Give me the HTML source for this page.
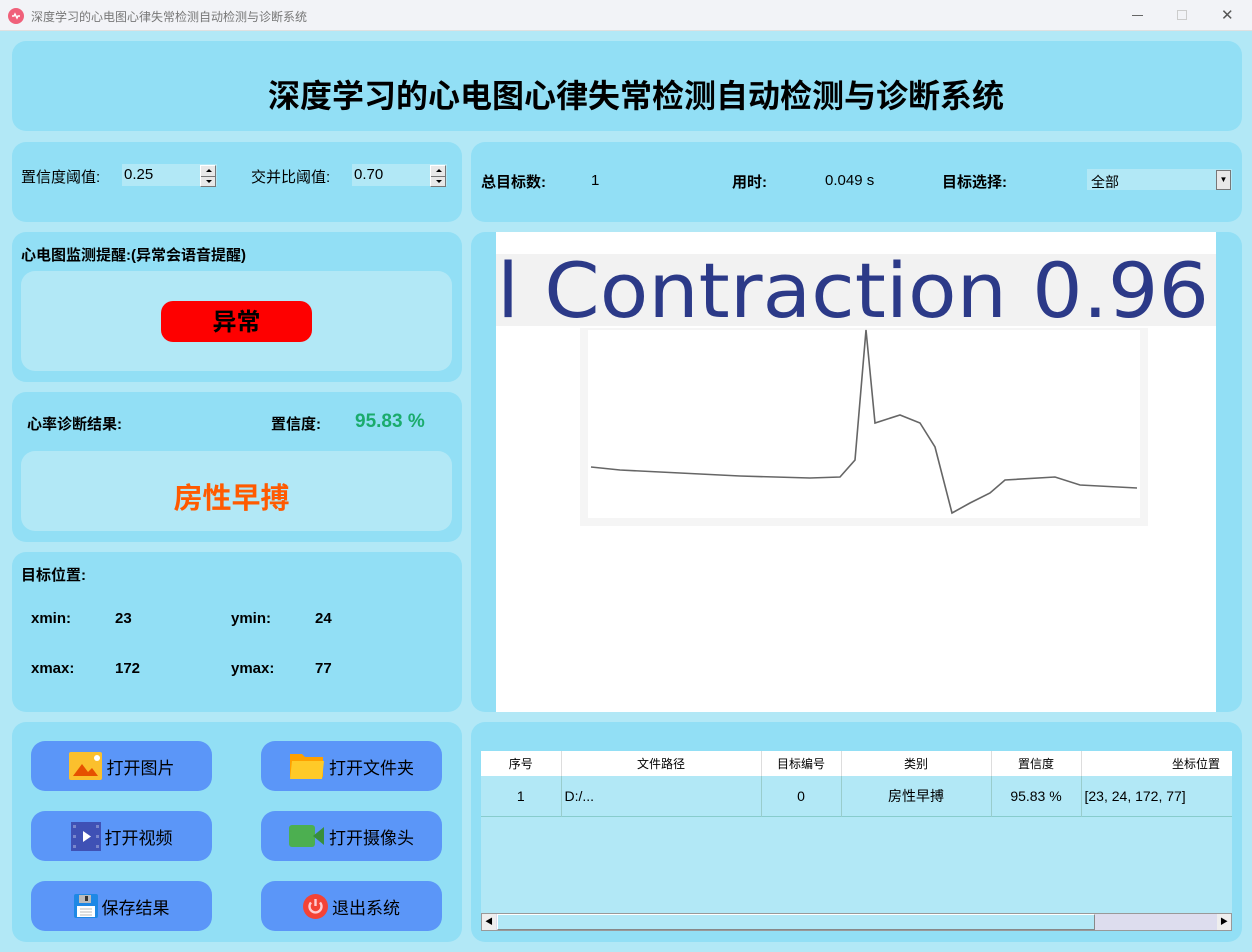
<!DOCTYPE html>
<html><head><meta charset="utf-8"><style>
*{margin:0;padding:0;box-sizing:border-box}
body{width:1252px;height:952px;background:#b2e8f6;font-family:"Liberation Sans","Noto Sans CJK SC",sans-serif;position:relative;overflow:hidden;color:#000}
.a{position:absolute}
.tb{left:0;top:0;width:1252px;height:31px;background:#f2f3f7;border-bottom:1px solid #e0e0e0}
.p{position:absolute;background:#92dff5;border-radius:14px}
.lbl{position:absolute;font-size:15px;white-space:nowrap}
.b{font-weight:bold}
.btn{position:absolute;width:181px;height:50px;background:#5b96f8;border-radius:14px;font-size:17px;display:flex;align-items:center;justify-content:center;gap:4px}
.spin{position:absolute;width:16px;height:22px;background:#e8e8e8;border:1px solid #777;border-top-color:#fff;border-left-color:#fff}
.spin:before{content:"";position:absolute;left:0;right:0;top:10px;border-top:1px solid #777}
.spin i{position:absolute;left:5px;width:0;height:0;border-left:3px solid transparent;border-right:3px solid transparent}
table{border-collapse:collapse;font-size:13px}
</style></head><body>
<div class="a tb">
 <svg class="a" style="left:8px;top:8px" width="16" height="16"><circle cx="8" cy="8" r="8" fill="#f0607a"/><path d="M4 8 h2 l1-2 l2 4 l1-2 h2" stroke="#fff" stroke-width="1.4" fill="none"/></svg>
 <div class="lbl" style="left:31px;top:8px;font-size:12px;color:#777">深度学习的心电图心律失常检测自动检测与诊断系统</div>
 <div class="a" style="left:1132px;top:15px;width:11px;border-top:1px solid #666"></div>
 <div class="a" style="left:1177px;top:10px;width:10px;height:10px;border:1px solid #ccc"></div>
 <div class="lbl" style="left:1221px;top:6px;font-size:15px;color:#555">✕</div>
</div>

<div class="p" style="left:12px;top:41px;width:1230px;height:90px"></div>
<div class="lbl b" style="left:0;width:1272px;text-align:center;top:71px;font-size:32px">深度学习的心电图心律失常检测自动检测与诊断系统</div>

<div class="p" style="left:12px;top:142px;width:450px;height:80px"></div>
<div class="lbl" style="left:21px;top:166px">置信度阈值:</div>
<div class="a" style="left:122px;top:164px;width:95px;height:22px;background:#b2e8f6"></div>
<div class="lbl" style="left:124px;top:166px">0.25</div>
<div class="spin" style="left:200px;top:165px"><i style="top:3px;border-bottom:3px solid #000"></i><i style="top:14px;border-top:3px solid #000"></i></div>
<div class="lbl" style="left:251px;top:166px">交并比阈值:</div>
<div class="a" style="left:352px;top:164px;width:95px;height:22px;background:#b2e8f6"></div>
<div class="lbl" style="left:354px;top:166px">0.70</div>
<div class="spin" style="left:430px;top:165px"><i style="top:3px;border-bottom:3px solid #000"></i><i style="top:14px;border-top:3px solid #000"></i></div>

<div class="p" style="left:471px;top:142px;width:771px;height:80px"></div>
<div class="lbl b" style="left:481px;top:171px">总目标数:</div>
<div class="lbl" style="left:591px;top:172px">1</div>
<div class="lbl b" style="left:732px;top:171px">用时:</div>
<div class="lbl" style="left:825px;top:172px">0.049 s</div>
<div class="lbl b" style="left:942px;top:171px">目标选择:</div>
<div class="a" style="left:1087px;top:169px;width:145px;height:21px;background:#b2e8f6"></div>
<div class="lbl" style="left:1091px;top:172px;font-size:14px">全部</div>
<div class="a" style="left:1216px;top:170px;width:15px;height:20px;background:#e8e8e8;border:1px solid #777;font-size:8px;text-align:center;line-height:18px">▼</div>

<div class="p" style="left:12px;top:232px;width:450px;height:150px"></div>
<div class="lbl b" style="left:21px;top:244px">心电图监测提醒:(异常会语音提醒)</div>
<div class="a" style="left:21px;top:271px;width:431px;height:100px;background:#b2e8f6;border-radius:14px"></div>
<div class="a" style="left:161px;top:301px;width:151px;height:41px;background:#fe0000;border-radius:12px;font-size:24px;font-weight:bold;text-align:center;line-height:43px">异常</div>

<div class="p" style="left:12px;top:392px;width:450px;height:150px"></div>
<div class="lbl b" style="left:27px;top:413px">心率诊断结果:</div>
<div class="lbl b" style="left:271px;top:413px">置信度:</div>
<div class="lbl b" style="left:355px;top:411px;font-size:19px;color:#1aab6c">95.83 %</div>
<div class="a" style="left:21px;top:451px;width:431px;height:80px;background:#b2e8f6;border-radius:14px"></div>
<div class="lbl b" style="left:21px;width:421px;text-align:center;top:475px;font-size:29px;color:#ff5a00">房性早搏</div>

<div class="p" style="left:12px;top:552px;width:450px;height:160px"></div>
<div class="lbl b" style="left:21px;top:564px">目标位置:</div>
<div class="lbl b" style="left:31px;top:610px">xmin:</div><div class="lbl b" style="left:115px;top:610px">23</div>
<div class="lbl b" style="left:231px;top:610px">ymin:</div><div class="lbl b" style="left:315px;top:610px">24</div>
<div class="lbl b" style="left:31px;top:660px">xmax:</div><div class="lbl b" style="left:115px;top:660px">172</div>
<div class="lbl b" style="left:231px;top:660px">ymax:</div><div class="lbl b" style="left:315px;top:660px">77</div>

<div class="p" style="left:471px;top:232px;width:771px;height:480px"></div>
<svg class="a" style="left:496px;top:232px" width="720" height="480" viewBox="496 232 720 480">
 <rect x="496" y="232" width="720" height="480" fill="#fff"/>
 <rect x="496" y="254" width="720" height="72" fill="#f2f2f2"/>
 <text x="497" y="317" font-family="DejaVu Sans,sans-serif" font-size="76" fill="#2c3a88" textLength="712" lengthAdjust="spacingAndGlyphs">l Contraction 0.96</text>
 <rect x="580" y="328" width="568" height="198" fill="#f5f5f5"/>
 <rect x="588" y="330" width="552" height="188" fill="#fff"/>
 <polyline points="591,467 620,470 680,473 740,476 810,478 840,477 855,460 866,330 875,423 900,415 920,423 935,447 952,513 970,503 990,493 1005,480 1055,477 1080,485 1137,488" fill="none" stroke="#666" stroke-width="1.6"/>
</svg>

<div class="p" style="left:12px;top:722px;width:450px;height:220px"></div>
<div class="btn" style="left:31px;top:741px"><svg width="34" height="29"><rect width="33" height="28" rx="2" fill="#fbc02d"/><path d="M4 24 L13 12 L19 20 L23 16 L29 24Z" fill="#e65100"/><circle cx="28" cy="6" r="3" fill="#fff"/></svg>打开图片</div>
<div class="btn" style="left:261px;top:741px"><svg width="36" height="28"><path d="M1 2h12l3 3h18v20H1z" fill="#ffa000"/><path d="M3 9h32l-2 18H1z" fill="#ffca28"/></svg>打开文件夹</div>
<div class="btn" style="left:31px;top:811px"><svg width="30" height="29"><rect width="30" height="29" fill="#3f51b5"/><g fill="#7986cb"><rect x="2" y="3" width="3" height="3"/><rect x="2" y="13" width="3" height="3"/><rect x="2" y="23" width="3" height="3"/><rect x="25" y="3" width="3" height="3"/><rect x="25" y="13" width="3" height="3"/><rect x="25" y="23" width="3" height="3"/></g><path d="M12 9 L20 14.5 L12 20Z" fill="#fff"/></svg>打开视频</div>
<div class="btn" style="left:261px;top:811px"><svg width="36" height="24"><rect y="1" width="26" height="22" rx="3" fill="#4caf50"/><path d="M24 12 L35 3 V21Z" fill="#388e3c"/></svg>打开摄像头</div>
<div class="btn" style="left:31px;top:881px"><svg width="24" height="24"><rect width="24" height="24" rx="2" fill="#1e88e5"/><rect x="5" y="1" width="12" height="8" fill="#bbb"/><rect x="11" y="2" width="3" height="5" fill="#333"/><rect x="3" y="12" width="18" height="11" fill="#fff"/><path d="M6 15h12M6 18h12M6 21h12" stroke="#bbb"/></svg>保存结果</div>
<div class="btn" style="left:261px;top:881px"><svg width="25" height="25"><circle cx="12.5" cy="12.5" r="12.5" fill="#f44336"/><path d="M8 8.5 A6 6 0 1 0 17 8.5" stroke="#ffcdd2" stroke-width="2.4" fill="none"/><path d="M12.5 5 V12" stroke="#ffcdd2" stroke-width="2.4"/></svg>退出系统</div>

<div class="p" style="left:471px;top:722px;width:771px;height:220px"></div>
<div class="a" style="left:481px;top:751px;width:751px;height:180px;background:#b2e8f6"></div>
<table class="a" style="left:481px;top:751px;width:751px">
<tr style="background:#fff;height:25px;font-size:12px">
<td style="width:80px;text-align:center;border-right:1px solid #ddd">序号</td><td style="width:200px;text-align:center;border-right:1px solid #ddd">文件路径</td><td style="width:80px;text-align:center;border-right:1px solid #ddd">目标编号</td><td style="width:150px;text-align:center;border-right:1px solid #ddd">类别</td><td style="width:90px;text-align:center;border-right:1px solid #ddd">置信度</td><td style="text-align:right;padding-right:12px">坐标位置</td></tr>
<tr style="height:40px;font-size:14px;border-bottom:1px solid #8cc">
<td style="text-align:center;border-right:1px solid #9cc">1</td><td style="padding-left:3px;border-right:1px solid #9cc">D:/...</td><td style="text-align:center;border-right:1px solid #9cc">0</td><td style="text-align:center;border-right:1px solid #9cc">房性早搏</td><td style="text-align:center;border-right:1px solid #9cc">95.83 %</td><td style="padding-left:3px">[23, 24, 172, 77]</td></tr>
</table>
<div class="a" style="left:481px;top:913px;width:751px;height:18px;background:#dde;border:1px solid #999"></div>
<div class="a" style="left:497px;top:914px;width:598px;height:16px;background:#b2e8f6;border:1px solid #888;border-top-color:#fff;border-left-color:#fff"></div>
<div class="a" style="left:482px;top:914px;width:14px;height:16px;background:#eee;font-size:8px;line-height:16px;text-align:center">◀</div>
<div class="a" style="left:1217px;top:914px;width:14px;height:16px;background:#eee;font-size:8px;line-height:16px;text-align:center">▶</div>
</body></html>
